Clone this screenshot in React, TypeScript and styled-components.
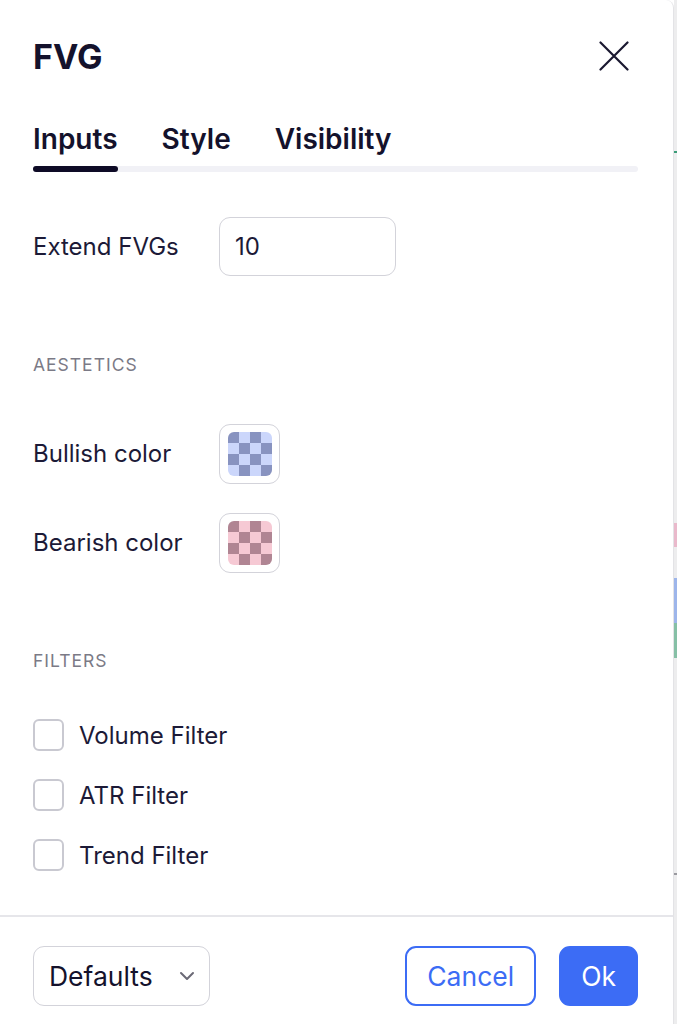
import * as React from 'react';
import styled, { createGlobalStyle } from 'styled-components';

const GlobalStyle = createGlobalStyle`
  html, body {
    margin: 0;
    padding: 0;
    height: 100%;
    background: #ffffff;
  }
  body {
    font-family: Inter, "Noto Sans", "Liberation Sans", sans-serif;
    color: #181632;
    -webkit-font-smoothing: antialiased;
  }
  #root {
    height: 100%;
  }
`;

const tabs = ['Inputs', 'Style', 'Visibility'];
const filters = ['Volume Filter', 'ATR Filter', 'Trend Filter'];

type Palette = { light: string; dark: string };
const bullish: Palette = { light: '#cbd6fb', dark: '#8893c0' };
const bearish: Palette = { light: '#f6c9d4', dark: '#b08593' };

function Checker({ light, dark }: Palette) {
  const cells = [];
  for (let r = 0; r < 4; r++) {
    for (let c = 0; c < 4; c++) {
      cells.push(<Cell key={`${r}-${c}`} $color={(r + c) % 2 === 0 ? dark : light} />);
    }
  }
  return <Board>{cells}</Board>;
}

export default function App() {
  return (
    <>
      <GlobalStyle />
      <Page>
        <Dialog>
          <Header>
            <Title>FVG</Title>
            <CloseButton aria-label="Close">
              <svg width="30" height="30" viewBox="0 0 30 30" fill="none">
                <path d="M1.5 1.5 L28.5 28.5 M28.5 1.5 L1.5 28.5" stroke="#1a1830" strokeWidth="2.2" strokeLinecap="round" />
              </svg>
            </CloseButton>
          </Header>

          <TabBar>
            <TabList>
              {tabs.map((t, i) => (
                <Tab key={t} $active={i === 0}>{t}</Tab>
              ))}
            </TabList>
            <Track>
              <Indicator />
            </Track>
          </TabBar>

          <Body>
            <Row>
              <Label>Extend FVGs</Label>
              <NumberInput defaultValue="10" />
            </Row>

            <SectionTitle>Aestetics</SectionTitle>
            <ColorList>
              <Row>
                <Label>Bullish color</Label>
                <Swatch><Checker {...bullish} /></Swatch>
              </Row>
              <Row>
                <Label>Bearish color</Label>
                <Swatch><Checker {...bearish} /></Swatch>
              </Row>
            </ColorList>

            <SectionTitle>Filters</SectionTitle>
            <CheckList>
              {filters.map((f) => (
                <CheckRow key={f}>
                  <Box />
                  <span>{f}</span>
                </CheckRow>
              ))}
            </CheckList>
          </Body>

          <Footer>
            <Select>
              <span>Defaults</span>
              <svg width="16" height="10" viewBox="0 0 16 10" fill="none">
                <path d="M2 2 L8 8 L14 2" stroke="#6b6a76" strokeWidth="2" strokeLinecap="round" strokeLinejoin="round" />
              </svg>
            </Select>
            <Actions>
              <Button $primary={false}>Cancel</Button>
              <Button $primary>Ok</Button>
            </Actions>
          </Footer>
        </Dialog>
        <Chart>
          <Mark $color="transparent" $h={151} />
          <Mark $color="#3a9c78" $h={2} />
          <Mark $color="transparent" $h={370} />
          <Mark $color="#e9b9cb" $h={24} />
          <Mark $color="transparent" $h={31} />
          <Mark $color="#9db5ea" $h={45} />
          <Mark $color="#86c0a6" $h={35} />
          <Mark $color="transparent" $h={215} />
          <Mark $color="#9a9aa0" $h={2} />
        </Chart>
      </Page>
    </>
  );
}

const Page = styled.div`
  display: flex;
  height: 100%;
  min-height: 1024px;
  background: #ffffff;
`;

const Dialog = styled.div`
  width: 673px;
  flex: none;
  display: flex;
  flex-direction: column;
  background: #ffffff;
  border-right: 1px solid #e3e3e6;
  border-top-right-radius: 8px;
`;

const Chart = styled.div`
  flex: 1;
  display: flex;
  flex-direction: column;
  background: #ededee;
`;

const Mark = styled.div<{ $color: string; $h: number }>`
  height: ${(p) => p.$h}px;
  background: ${(p) => p.$color};
  flex: none;
`;

const Header = styled.div`
  height: 112px;
  display: flex;
  align-items: center;
  justify-content: space-between;
  padding: 0 44px 0 33px;
  box-sizing: border-box;
`;

const Title = styled.h1`
  margin: 0;
  font-size: 34px;
  font-weight: 700;
  color: #14122c;
`;

const CloseButton = styled.button`
  border: 0;
  background: none;
  padding: 0;
  width: 30px;
  height: 30px;
  display: flex;
  cursor: pointer;
`;

const TabBar = styled.div`
  padding: 10px 35px 0 33px;
`;

const TabList = styled.div`
  display: flex;
  gap: 44px;
  height: 34px;
  align-items: center;
`;

const Tab = styled.div<{ $active: boolean }>`
  font-size: 28px;
  font-weight: 600;
  color: #14122c;
`;

const Track = styled.div`
  margin-top: 10px;
  height: 6px;
  border-radius: 3px;
  background: #f1f1f6;
`;

const Indicator = styled.div`
  width: 85px;
  height: 6px;
  border-radius: 3px;
  background: #0e0b26;
`;

const Body = styled.div`
  flex: 1;
  display: flex;
  flex-direction: column;
  padding: 45px 36px 0 33px;
`;

const Row = styled.div`
  display: flex;
  align-items: center;
  height: 59px;
`;

const Label = styled.div`
  width: 186px;
  font-size: 24px;
  color: #1c1a37;
`;

const NumberInput = styled.input`
  width: 177px;
  height: 59px;
  box-sizing: border-box;
  border: 1.5px solid #d3d3da;
  border-radius: 11px;
  padding: 0 15px;
  font-family: inherit;
  font-size: 24px;
  color: #1c1a37;
  outline: none;
`;

const SectionTitle = styled.div`
  margin-top: 78px;
  height: 22px;
  line-height: 22px;
  font-size: 17.5px;
  text-transform: uppercase;
  letter-spacing: 1px;
  color: #7b7a86;
`;

const ColorList = styled.div`
  margin-top: 48px;
  display: flex;
  flex-direction: column;
  gap: 30px;
`;

const Swatch = styled.div`
  width: 61px;
  height: 60px;
  box-sizing: border-box;
  border: 1.5px solid #d3d3da;
  border-radius: 11px;
  display: flex;
  align-items: center;
  justify-content: center;
`;

const Board = styled.div`
  width: 44px;
  height: 44px;
  display: grid;
  grid-template-columns: repeat(4, 1fr);
  grid-template-rows: repeat(4, 1fr);
  border-radius: 6px;
  overflow: hidden;
`;

const Cell = styled.div<{ $color: string }>`
  background: ${(p) => p.$color};
`;

const CheckList = styled.div`
  margin-top: 47px;
  display: flex;
  flex-direction: column;
  gap: 28px;
`;

const CheckRow = styled.label`
  display: flex;
  align-items: center;
  gap: 15px;
  height: 32px;
  font-size: 24px;
  color: #1c1a37;
`;

const Box = styled.span`
  width: 31px;
  height: 32px;
  box-sizing: border-box;
  border: 2px solid #c9c9d1;
  border-radius: 6px;
`;

const Footer = styled.div`
  border-top: 2px solid #e6e6ea;
  padding: 29px 35px 18px 33px;
  display: flex;
  align-items: center;
  justify-content: space-between;
`;

const Select = styled.div`
  width: 177px;
  height: 60px;
  box-sizing: border-box;
  border: 1.5px solid #d3d3da;
  border-radius: 11px;
  display: flex;
  align-items: center;
  justify-content: space-between;
  padding: 0 14px 0 15px;
  font-size: 26.5px;
  color: #14122c;
`;

const Actions = styled.div`
  display: flex;
  gap: 23px;
`;

const Button = styled.button<{ $primary: boolean }>`
  height: 60px;
  box-sizing: border-box;
  padding: 0 20px;
  min-width: ${(p) => (p.$primary ? '78px' : '131px')};
  border-radius: 11px;
  font-family: inherit;
  font-size: 26.5px;
  border: 2px solid #3c6cf5;
  background: ${(p) => (p.$primary ? '#3c6cf5' : '#ffffff')};
  color: ${(p) => (p.$primary ? '#ffffff' : '#3c6cf5')};
  cursor: pointer;
`;
